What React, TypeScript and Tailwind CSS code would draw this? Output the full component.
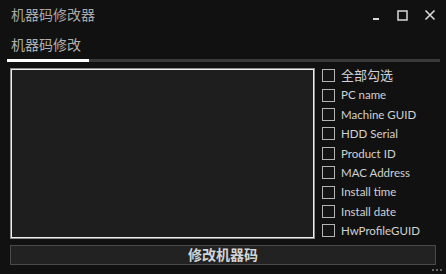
const labels = [
  "全部勾选",
  "PC name",
  "Machine GUID",
  "HDD Serial",
  "Product ID",
  "MAC Address",
  "Install time",
  "Install date",
  "HwProfileGUID",
];

const App = () => {
  return (
    <div
      className="w-[446px] h-[274px] bg-[#111111] relative overflow-hidden"
      style={{ fontFamily: '"Noto Sans", "Noto Sans CJK SC", sans-serif' }}
    >
      {/* title bar */}
      <div className="flex items-center h-[30px] pl-[11px] pr-[10px]">
        <div className="text-[14px] text-[#a8a8a8] leading-none">机器码修改器</div>
        <div className="ml-auto flex items-center gap-[16px] text-[#d0d0d0]">
          <svg width="10" height="12" viewBox="0 0 10 12">
            <rect x="2" y="9" width="6" height="2" fill="#d8d8d8" />
          </svg>
          <svg width="11" height="11" viewBox="0 0 11 11">
            <rect x="1" y="1" width="9" height="9" fill="none" stroke="#d8d8d8" strokeWidth="1.5" />
          </svg>
          <svg width="12" height="12" viewBox="0 0 12 12">
            <path d="M1.5 1.5 L10.5 10.5 M10.5 1.5 L1.5 10.5" stroke="#d8d8d8" strokeWidth="1.6" />
          </svg>
        </div>
      </div>

      {/* tab */}
      <div className="pl-[11px] h-[29px] flex items-center">
        <span className="text-[14px] text-[#b0b0b0] leading-none">机器码修改</span>
      </div>
      <div className="ml-[7px] mr-[6px] h-[3px] bg-[#3a3a3a] flex">
        <div className="w-[82px] bg-white" />
      </div>

      {/* content */}
      <div className="flex mt-[6px] ml-[10px]">
        <div className="w-[305px] h-[171px] border border-[#8c8c8c] bg-[#1e1e1e] shadow-[inset_0_0_0_1px_#efefef]" />
        <div className="ml-[7px] -mt-[2px] flex flex-col">
          {labels.map((l, i) => (
            <div key={l} className="h-[19.4px] flex items-center">
              <div className="w-[13px] h-[13px] border border-[#b4b4b4] bg-[#141414]" />
              <span
                className={i === 0 ? "ml-[6px] text-[13px] text-[#d2d2d2] leading-none" : "ml-[6px] text-[11.5px] text-[#d2d2d2] leading-none"}
                style={{ fontFamily: 'Lato, "Noto Sans CJK SC", sans-serif' }}
              >
                {l}
              </span>
            </div>
          ))}
        </div>
      </div>

      {/* button */}
      <div className="mt-[4px] ml-[10px] w-[426px] h-[20px] border border-[#4a4a4a] bg-[#222222] flex items-center justify-center">
        <span className="text-[14px] font-bold text-[#d4d4d4] leading-none">修改机器码</span>
      </div>

      {/* resize grip */}
      <div className="absolute right-[4px] bottom-[3px] flex gap-[2px]">
        <div className="w-[2px] h-[2px] bg-[#666]" />
        <div className="w-[2px] h-[2px] bg-[#666]" />
        <div className="w-[2px] h-[2px] bg-[#666]" />
      </div>
    </div>
  );
};

export default App;
